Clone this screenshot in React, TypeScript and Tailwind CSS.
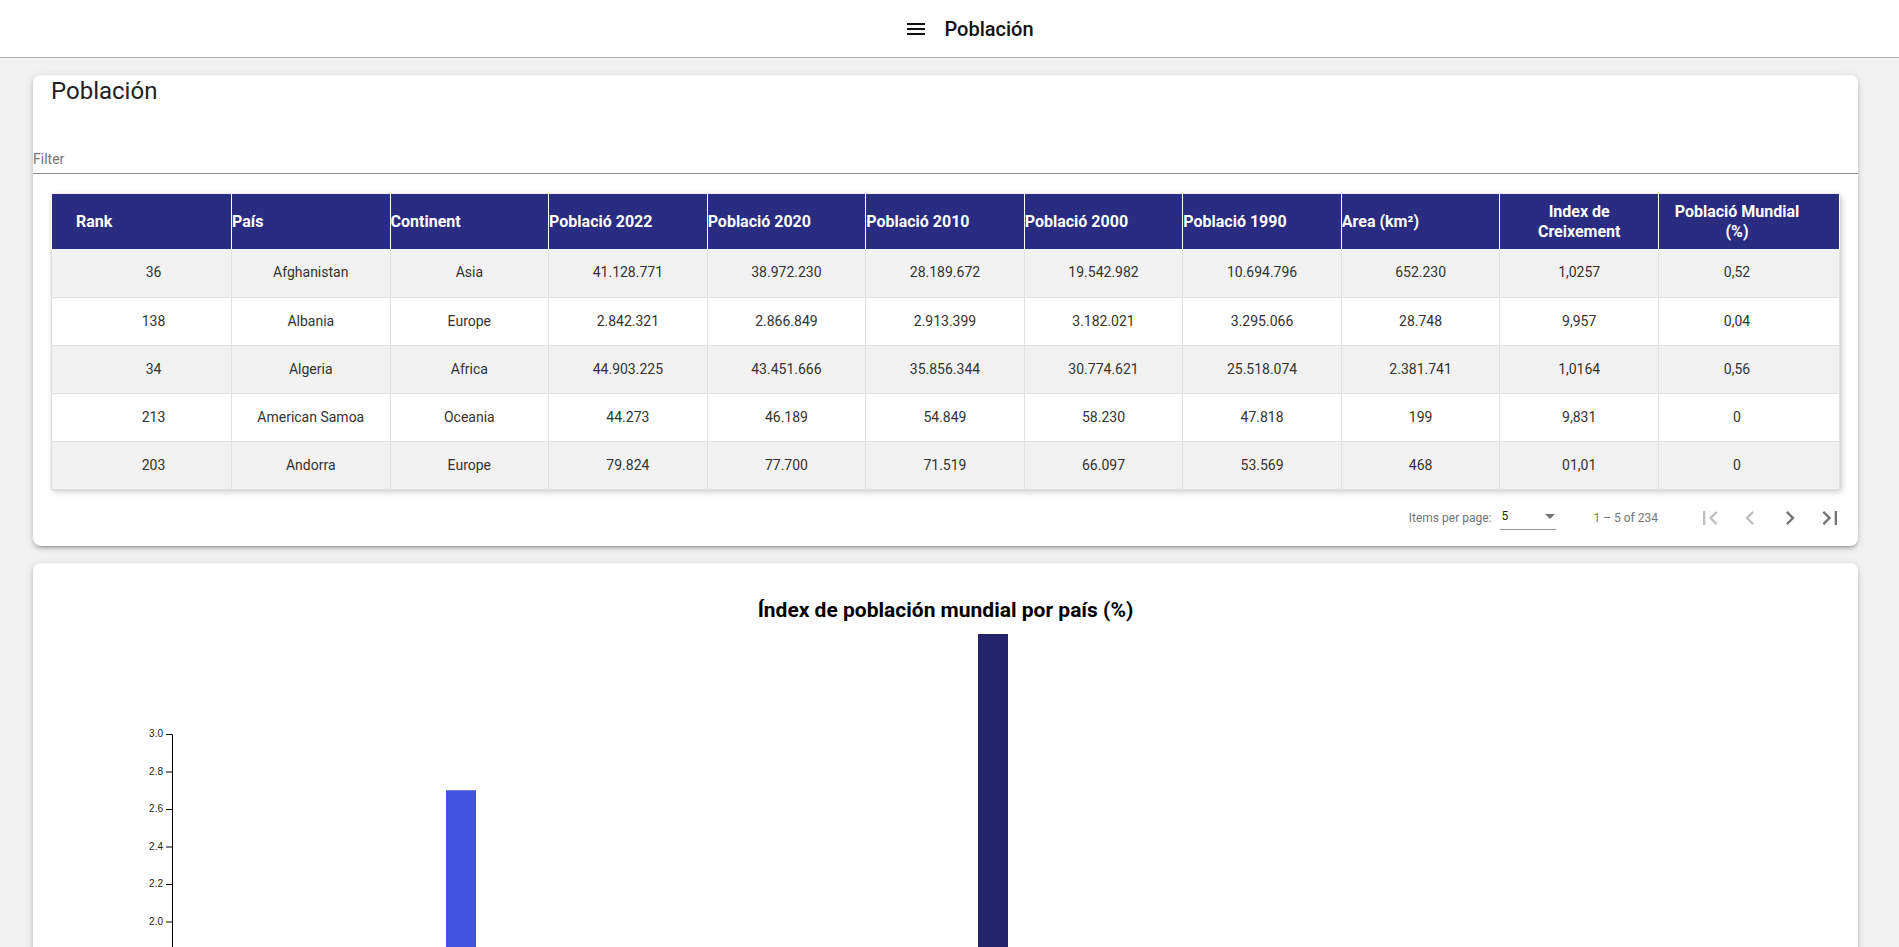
import React from 'react';

type Row = {
  rank: string;
  country: string;
  continent: string;
  p2022: string;
  p2020: string;
  p2010: string;
  p2000: string;
  p1990: string;
  area: string;
  growth: string;
  world: string;
};

const rows: Row[] = [
  { rank: '36', country: 'Afghanistan', continent: 'Asia', p2022: '41.128.771', p2020: '38.972.230', p2010: '28.189.672', p2000: '19.542.982', p1990: '10.694.796', area: '652.230', growth: '1,0257', world: '0,52' },
  { rank: '138', country: 'Albania', continent: 'Europe', p2022: '2.842.321', p2020: '2.866.849', p2010: '2.913.399', p2000: '3.182.021', p1990: '3.295.066', area: '28.748', growth: '9,957', world: '0,04' },
  { rank: '34', country: 'Algeria', continent: 'Africa', p2022: '44.903.225', p2020: '43.451.666', p2010: '35.856.344', p2000: '30.774.621', p1990: '25.518.074', area: '2.381.741', growth: '1,0164', world: '0,56' },
  { rank: '213', country: 'American Samoa', continent: 'Oceania', p2022: '44.273', p2020: '46.189', p2010: '54.849', p2000: '58.230', p1990: '47.818', area: '199', growth: '9,831', world: '0' },
  { rank: '203', country: 'Andorra', continent: 'Europe', p2022: '79.824', p2020: '77.700', p2010: '71.519', p2000: '66.097', p1990: '53.569', area: '468', growth: '01,01', world: '0' },
];

const ticks = ['0.0', '0.2', '0.4', '0.6', '0.8', '1.0', '1.2', '1.4', '1.6', '1.8', '2.0', '2.2', '2.4', '2.6', '2.8', '3.0'];

// y scale: 3.0 -> 110, 37.5px per 0.2
const yOf = (v: number) => 110 + (3 - v) * 187.5;

function PageIcon({ d, disabled }: { d: string; disabled?: boolean }) {
  return (
    <button
      type="button"
      className={`w-10 h-10 flex items-center justify-center ${disabled ? 'text-black/25' : 'text-black/55'}`}
    >
      <svg viewBox="0 0 24 24" className="w-7 h-7" fill="currentColor" aria-hidden="true">
        <path d={d} />
      </svg>
    </button>
  );
}

export default function App() {
  const headCls = 'text-white font-bold text-[16px] leading-5 border-x border-white';
  const cellCls = 'text-center text-[14px] text-[#333] border-x border-b border-[#e0e0e0]';

  return (
    <div className="min-h-screen bg-[#f2f2f2] font-['Roboto',sans-serif] pb-10">
      <header className="h-[58px] bg-white border-b border-[#b5b5b5] flex items-center justify-center pl-[39px]">
        <svg viewBox="0 0 24 24" className="w-6 h-6" fill="#111" aria-hidden="true">
          <path d="M3 18h18v-2H3v2zm0-5h18v-2H3v2zm0-7v2h18V6H3z" />
        </svg>
        <span className="ml-4 text-[20px] font-medium text-[#111]">Población</span>
      </header>

      <main className="ml-[33px] mr-[41px] pt-[17px]">
        <section className="bg-white rounded-lg shadow-[0_3px_3px_-2px_rgba(0,0,0,0.2),0_3px_4px_0_rgba(0,0,0,0.14),0_1px_8px_0_rgba(0,0,0,0.12)]">
          <h2 className="ml-[18px] text-[24px] leading-8 text-[#222]">Población</h2>

          <div className="mt-[40px] pb-[2px] border-b border-[#8c8c8c]">
            <span className="text-[14px] leading-5 text-[#757575]">Filter</span>
          </div>

          <div className="mx-[18px] mt-5 shadow-[2px_2px_6px_0_rgba(0,0,0,0.18),0_0_3px_0_rgba(0,0,0,0.08)]">
            <table className="w-full table-fixed border-collapse">
              <colgroup>
                <col className="w-[180px]" />
                <col />
                <col />
                <col />
                <col />
                <col />
                <col />
                <col />
                <col />
                <col />
                <col className="w-[181px]" />
              </colgroup>
              <thead>
                <tr className="h-[55px] bg-[#292c80]">
                  <th className={`${headCls} text-left pl-6`}>Rank</th>
                  <th className={`${headCls} text-left`}>País</th>
                  <th className={`${headCls} text-left`}>Continent</th>
                  <th className={`${headCls} text-left`}>Població 2022</th>
                  <th className={`${headCls} text-left`}>Població 2020</th>
                  <th className={`${headCls} text-left`}>Població 2010</th>
                  <th className={`${headCls} text-left`}>Població 2000</th>
                  <th className={`${headCls} text-left`}>Població 1990</th>
                  <th className={`${headCls} text-left`}>Area (km²)</th>
                  <th className={`${headCls} text-center`}>
                    Index de
                    <br />
                    Creixement
                  </th>
                  <th className={`${headCls} text-center pr-6`}>
                    Població Mundial
                    <br />
                    (%)
                  </th>
                </tr>
              </thead>
              <tbody>
                {rows.map((r, i) => (
                  <tr key={r.country} className={`h-[48px] ${i % 2 === 0 ? 'bg-[#f2f2f2]' : 'bg-white'}`}>
                    <td className={`${cellCls} pl-6`}>{r.rank}</td>
                    <td className={cellCls}>{r.country}</td>
                    <td className={cellCls}>{r.continent}</td>
                    <td className={cellCls}>{r.p2022}</td>
                    <td className={cellCls}>{r.p2020}</td>
                    <td className={cellCls}>{r.p2010}</td>
                    <td className={cellCls}>{r.p2000}</td>
                    <td className={cellCls}>{r.p1990}</td>
                    <td className={cellCls}>{r.area}</td>
                    <td className={cellCls}>{r.growth}</td>
                    <td className={`${cellCls} pr-6`}>{r.world}</td>
                  </tr>
                ))}
              </tbody>
            </table>
          </div>

          {/* paginator */}
          <div className="h-[56px] flex items-center justify-end pr-2 text-[12px] text-[#757575]">
            <span className="mr-[9px]">Items per page:</span>
            <div className="w-[56px] h-[26px] mt-[-2px] flex items-center justify-between border-b border-black/40">
              <span className="text-[12px] text-[#222] pl-px">5</span>
              <span className="mr-[1px] w-0 h-0 border-x-[5px] border-x-transparent border-t-[5px] border-t-[#757575]" />
            </div>
            <span className="ml-[37px] mr-8">1 – 5 of 234</span>
            <PageIcon disabled d="M18.41 16.59L13.82 12l4.59-4.59L17 6l-6 6 6 6zM6 6h2v12H6z" />
            <PageIcon disabled d="M15.41 7.41L14 6l-6 6 6 6 1.41-1.41L10.83 12z" />
            <PageIcon d="M10 6L8.59 7.41 13.17 12l-4.58 4.59L10 18l6-6z" />
            <PageIcon d="M5.59 7.41L10.18 12l-4.59 4.59L7 18l6-6-6-6zM16 6h2v12h-2z" />
          </div>
        </section>

        <section className="mt-[17px] bg-white rounded-lg pt-[33px] shadow-[0_3px_3px_-2px_rgba(0,0,0,0.2),0_3px_4px_0_rgba(0,0,0,0.14),0_1px_8px_0_rgba(0,0,0,0.12)]">
          <h3 className="text-center text-[21px] leading-7 font-bold text-black">
            Índex de población mundial por país (%)
          </h3>
          <svg width="100%" height="720" className="block">
            <g fontSize="10" fontFamily="sans-serif" fill="#222">
              {ticks.map((t) => {
                const y = yOf(parseFloat(t));
                return (
                  <g key={t}>
                    <line x1={133} x2={139} y1={y + 0.5} y2={y + 0.5} stroke="#000" />
                    <text x={130} y={y} dy="0.32em" textAnchor="end">
                      {t}
                    </text>
                  </g>
                );
              })}
            </g>
            <path d="M133,110.5H139.5V672.5H133" fill="none" stroke="#000" />
            <rect x={413} y={yOf(2.7)} width={30} height={672 - yOf(2.7)} fill="#4452e0" />
            <rect x={945} y={10} width={30} height={662} fill="#23236c" />
          </svg>
        </section>
      </main>
    </div>
  );
}
